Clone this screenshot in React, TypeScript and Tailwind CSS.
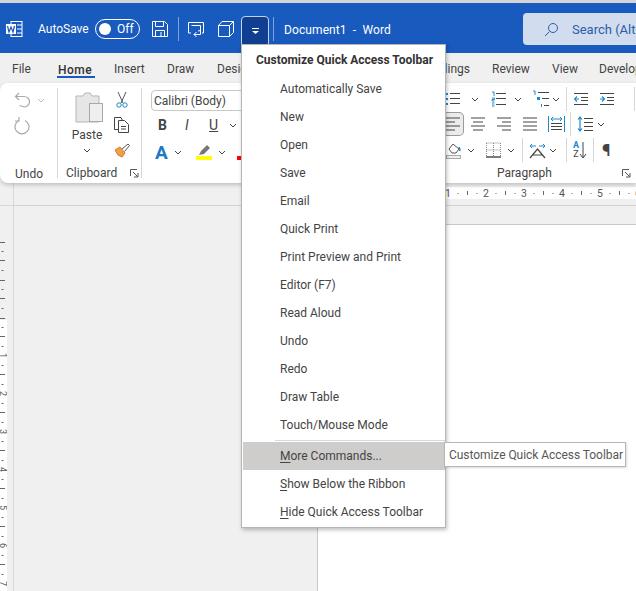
import React from "react";

const Chev = ({ c = "#444", className = "" }: { c?: string; className?: string }) => (
  <svg width="8" height="5" viewBox="0 0 8 5" className={className}>
    <path d="M1 1l3 3 3-3" fill="none" stroke={c} strokeWidth="1" />
  </svg>
);

const Lines = ({ w, xs }: { w: number; xs: [number, number][] }) => (
  <svg width={w} height="14" viewBox={`0 0 ${w} 14`}>
    {xs.map(([a, b], i) => (
      <rect key={i} x={a} y={1 + i * 4 - 0.5} width={b - a} height="1" fill="#444" />
    ))}
  </svg>
);

const BulletList = () => (
  <svg width="18" height="16" viewBox="0 0 18 16">
    <rect x="0" y="2" width="2" height="2" fill="#1e8bcd" /><rect x="0" y="7" width="2" height="2" fill="#1e8bcd" /><rect x="0" y="12" width="2" height="2" fill="#1e8bcd" />
    <path d="M4 2.500h10M4 7.500h10M4 12.500h10" stroke="#444" />
  </svg>
);
const NumberList = () => (
  <svg width="16" height="16" viewBox="0 0 16 16">
    <path d="M1 1h2v4M1 7h2.500v1.500H1V10h2.500M1 12h2.500M1 14h2.500M1 16h2.500" stroke="#1e8bcd" fill="none" />
    <path d="M5 2.500h10M5 7.500h10M5 13.500h10" stroke="#444" />
  </svg>
);
const MultiList = () => (
  <svg width="18" height="18" viewBox="0 0 18 18">
    <path d="M1 1h2v4" stroke="#1e8bcd" fill="none" />
    <rect x="5" y="7" width="3" height="3" fill="#1e8bcd" /><rect x="9" y="14" width="1" height="3" fill="#1e8bcd" />
    <path d="M6 2.500h11M10 8.500h7M12 15.500h5" stroke="#444" />
  </svg>
);
const Indent = ({ out }: { out?: boolean }) => (
  <svg width="15" height="14" viewBox="0 0 15 14">
    <path d="M0 1.500h14M7 5.500h7M7 8.500h7M0 12.500h14" stroke="#444" />
    {out ? <path d="M5 7H.5M3 4.500L.5 7 3 9.500" stroke="#1e8bcd" fill="none" strokeWidth="1.200" /> : <path d="M0 7h4.500M2 4.500L4.500 7 2 9.500" stroke="#1e8bcd" fill="none" strokeWidth="1.200" />}
  </svg>
);

const TitleText = ({ children, className = "" }: { children: React.ReactNode; className?: string }) => (
  <span className={`text-white text-[12px] leading-none ${className}`}>{children}</span>
);

const Tab = ({ label, className = "" }: { label: string; className?: string }) => (
  <span className={`shrink-0 text-[12px] text-[#444] leading-none whitespace-nowrap ${className}`}>{label}</span>
);

const Launcher = () => (
  <svg width="9" height="9" viewBox="0 0 9 9">
    <path d="M.5 7V.5h6.500M3 3l4.500 4.500M4 8h4V4" fill="none" stroke="#555" />
  </svg>
);

const VSep = ({ className = "" }: { className?: string }) => <div className={`w-px shrink-0 bg-[#d6d6d6] ${className}`} />;

const menuItems = ["Automatically Save", "New", "Open", "Save", "Email", "Quick Print", "Print Preview and Print", "Editor (F7)", "Read Aloud", "Undo", "Redo", "Draw Table", "Touch/Mouse Mode"];

const U = ({ children }: { children: React.ReactNode }) => <span className="underline underline-offset-2">{children}</span>;

const HRuler = () => {
  const ticks: React.ReactNode[] = [];
  for (let i = 0; i < 6; i++) {
    const x = 3 + i * 38;
    ticks.push(<text key={"n" + i} x={x - 3} y="10" fontSize="10.500" fill="#555" fontFamily="Roboto">{i + 1}</text>);
    ticks.push(<rect key={"a" + i} x={x + 9.500} y="6" width="1" height="1" fill="#666" />);
    ticks.push(<rect key={"b" + i} x={x + 19} y="4" width="1" height="4" fill="#666" />);
    ticks.push(<rect key={"c" + i} x={x + 28.500} y="6" width="1" height="1" fill="#666" />);
  }
  return (
    <svg width="191" height="12" viewBox="0 0 191 12" className="block">{ticks}</svg>
  );
};

const VRuler = () => {
  const items: React.ReactNode[] = [];
  for (let i = -3; i < 7; i++) {
    const y = 150 + i * 38;
    if (i >= 0) {
      items.push(<text key={"n" + i} x="0" y="0" fontSize="9" fill="#555" fontFamily="Roboto" transform={`translate(0 ${y - 3}) rotate(90)`}>{i + 1}</text>);
    } else {
      items.push(<rect key={"t" + i} x="0" y={y} width="5" height="1" fill="#666" />);
    }
    items.push(<rect key={"a" + i} x="1.500" y={y + 9} width="2" height="1" fill="#666" />);
    items.push(<rect key={"b" + i} x="0" y={y + 18} width="5" height="1" fill="#666" />);
    items.push(<rect key={"c" + i} x="1.500" y={y + 28} width="2" height="1" fill="#666" />);
  }
  return <svg width="7" height="385" viewBox="0 0 7 385" className="block">{items}</svg>;
};

export default function App() {
  return (
    <div className="relative w-[636px] h-[591px] overflow-hidden bg-[#f0f0f0] font-['Roboto',sans-serif] flex flex-col">
      <div className="h-[3px] bg-[#d4d4d4] shrink-0" />
      {/* Title bar */}
      <div className="h-[50px] bg-[#185abd] flex items-center shrink-0">
        <svg width="17" height="16" viewBox="0 0 17 16" className="ml-[6px] mt-[2px] shrink-0">
          <rect x="5" y=".5" width="11" height="15" fill="#185abd" stroke="#fff" />
          <path d="M11 4h5M11 8h5M11 12h5" stroke="#fff" />
          <rect x="0" y="3" width="10" height="10" fill="#fff" />
          <path d="M1.500 5l1.500 6 2-5 2 5 1.500-6" fill="none" stroke="#185abd" strokeWidth="1.200" />
        </svg>
        <TitleText className="ml-[15px] w-[50px] shrink-0 mt-[2px]">AutoSave</TitleText>
        <div className="ml-[7px] w-[45px] h-[20px] mt-[2px] rounded-full border border-white flex items-center shrink-0">
          <div className="ml-[3px] w-[12px] h-[12px] rounded-full bg-white" />
          <span className="ml-[6px] text-[12px] text-white leading-none">Off</span>
        </div>
        <svg width="16" height="16" viewBox="0 0 16 16" className="ml-[12px] mt-[2px] shrink-0">
          <path d="M.5.5h12l3 3v12H.5z" fill="none" stroke="#fff" />
          <path d="M3.500.5v5h8v-5M3.500 15.500v-6h9v6M9 11v4" fill="none" stroke="#fff" />
        </svg>
        <div className="ml-[10px] mt-[2px] w-px h-[24px] bg-[#7ea3dc] shrink-0" />
        <svg width="17" height="16" viewBox="0 0 17 16" className="ml-[9px] mt-[2px] shrink-0">
          <path d="M3 12H.5V1.500h15V12H14" fill="none" stroke="#fff" />
          <path d="M3.500 4.500h9v6" fill="none" stroke="#fff" />
          <path d="M12.500 9v4.500H6M8.500 11L6 13.500 8.500 16M10 10l2.500-.5" fill="none" stroke="#fff" />
        </svg>
        <svg width="16" height="16" viewBox="0 0 16 16" className="ml-[13px] mt-[2px] shrink-0">
          <path d="M.5 4.500h11v11H.5zM.5 4.500L4 .5h11.500v11l-4 4M15.500.5l-4 4" fill="none" stroke="#fff" />
        </svg>
        <div className="ml-[7px] w-[28px] h-[31px] mt-[7px] mb-0 bg-[#103f91] border border-[#c4d3ea] rounded-[4px] flex items-center justify-center shrink-0">
          <svg width="9" height="7" viewBox="0 0 9 7">
            <path d="M1 .5h7" stroke="#fff" />
            <path d="M1 3l3.500 3L8 3z" fill="#fff" />
          </svg>
        </div>
        <div className="ml-[4px] mt-[2px] w-px h-[24px] bg-[#7ea3dc] shrink-0" />
        <TitleText className="ml-[10px] mt-[3px] whitespace-pre tracking-[0.1px]">Document1  -  Word</TitleText>
        <div className="ml-auto mt-[2px] w-[113px] h-[32px] bg-[#d1dcef] rounded-l-[4px] flex items-center overflow-hidden shrink-0">
          <svg width="15" height="15" viewBox="0 0 15 15" className="ml-[21px] shrink-0">
            <circle cx="9" cy="6" r="4.500" fill="none" stroke="#2a5ea8" />
            <path d="M5.500 9.500L1 14" stroke="#2a5ea8" />
          </svg>
          <span className="ml-[13px] text-[13px] text-[#2a5ea8] whitespace-nowrap leading-none">Search (Alt+Q)</span>
        </div>
      </div>
      {/* Tabs */}
      <div className="h-[30px] flex items-center shrink-0 bg-[#f0f0f0] pt-[1px]">
        <Tab label="File" className="ml-[12px] w-[46px]" />
        <div className="relative w-[56px] shrink-0 leading-none">
          <span className="text-[12px] font-medium tracking-[0.5px] text-[#333] leading-none">Home</span>
          <div className="absolute left-[-1px] top-[15px] w-[38px] h-[2px] bg-[#185abd]" />
        </div>
        <Tab label="Insert" className="w-[53px]" />
        <Tab label="Draw" className="w-[50px]" />
        <Tab label="Design" className="w-[60px]" />
        <Tab label="Layout" className="w-[60px]" />
        <Tab label="References" className="w-[84px]" />
        <Tab label="Mailings" className="w-[71px] text-right pr-[22px]" />
        <Tab label="Review" className="w-[60px]" />
        <Tab label="View" className="w-[47px]" />
        <Tab label="Developer" />
      </div>
      {/* Ribbon */}
      <div className="h-[100px] bg-white rounded-l-[8px] shadow-[0_2px_4px_rgba(0,0,0,0.2)] flex shrink-0 relative">
        {/* Undo */}
        <div className="w-[57px] flex flex-col items-start pl-[14px] pt-[8px] shrink-0">
          <div className="flex items-center h-[18px]">
            <svg width="17" height="17" viewBox="0 0 17 17">
              <path d="M5.500 13.500l5 1.500c3 0 5-3 5-5.500s-2.500-5-5.500-5H2M5 1L1.500 4.500 5 8" fill="none" stroke="#aaa" strokeWidth="1.200" />
            </svg>
            <Chev c="#bbb" className="ml-[6px] mt-[1px]" />
          </div>
          <svg width="17" height="18" viewBox="0 0 17 18" className="mt-[8px]">
            <path d="M11 3.500A7 7 0 1 1 5 3.500" fill="none" stroke="#aaa" strokeWidth="1.200" />
            <path d="M5 0v4H1" fill="none" stroke="#aaa" strokeWidth="1.200" />
          </svg>
          <span className="text-[12px] text-[#444] leading-none mt-[33px] ml-[1px]">Undo</span>
        </div>
        <VSep className="my-[5px]" />
        {/* Clipboard */}
        <div className="w-[83px] relative shrink-0 flex flex-col pt-[9px]">
          <div className="flex">
            <div className="w-[58px] flex flex-col items-center">
              <svg width="28" height="31" viewBox="0 0 28 31" className="ml-[4px]">
                <path d="M1 4h7l2-3h5l2 3h7v26H1z" fill="#e6e6e6" stroke="#b5b5b5" />
                <rect x="14.500" y="11.500" width="13" height="18" fill="#efefef" stroke="#a8a8a8" />
              </svg>
              <span className="text-[12px] text-[#444] leading-none mt-[6px]">Paste</span>
              <Chev className="mt-[7px]" />
            </div>
            <div className="flex flex-col items-center w-[16px] ml-[-2px]">
              <svg width="12" height="16" viewBox="0 0 12 16">
                <path d="M2 0l5 11M10 0L5 11" stroke="#555" />
                <circle cx="3" cy="13" r="2.200" fill="none" stroke="#1e8bcd" />
                <circle cx="9" cy="13" r="2.200" fill="none" stroke="#1e8bcd" />
              </svg>
              <svg width="16" height="16" viewBox="0 0 16 16" className="mt-[9px]">
                <path d="M4 12.500H.5V.5H7l1.500 3" fill="none" stroke="#444" />
                <path d="M4.500 3.500h6l4 4v8h-10z" fill="none" stroke="#444" />
                <path d="M7 9.500h5M7 12h5" stroke="#444" />
              </svg>
              <svg width="16" height="15" viewBox="0 0 16 15" className="mt-[10px]">
                <path d="M1 7l5-3 5 6-3 4-4-2z" fill="#f0a04a" stroke="#d67a1c" />
                <path d="M8 6l6-5 1.500 1.500-5 6" fill="none" stroke="#555" />
              </svg>
            </div>
          </div>
          <div className="absolute left-[8px] bottom-[4px] text-[12px] text-[#444] leading-none">Clipboard</div>
          <div className="absolute right-[2px] bottom-[5px] leading-none"><Launcher /></div>
        </div>
        <VSep className="my-[5px]" />
        {/* Font */}
        <div className="w-[140px] pl-[9px] pt-[7px] shrink-0 flex flex-col">
          <div className="w-[130px] h-[21px] border border-[#c8c8c8] rounded-[4px] flex items-center pl-[2px]">
            <span className="text-[12px] text-[#444] leading-none">Calibri (Body)</span>
          </div>
          <div className="flex items-center mt-[6px] h-[16px]">
            <span className="ml-[7px] w-[27px] text-[14px] font-bold text-[#444] leading-none">B</span>
            <span className="w-[24px] text-[14px] italic text-[#444] leading-none">I</span>
            <span className="w-[20px] text-[14px] underline text-[#444] leading-none">U</span>
            <Chev />
          </div>
          <div className="flex items-center mt-[10px] h-[18px]">
            <span className="ml-[4px] w-[19px] text-[19px] font-bold text-[#1e78c8] leading-none">A</span>
            <Chev className="mr-[14px]" />
            <div className="flex flex-col items-center mr-[6px]">
              <svg width="14" height="12" viewBox="0 0 14 12">
                <path d="M2 11l2-4 6-6 3 3-6 6z" fill="#777" />
              </svg>
              <div className="w-[16px] h-[4px] bg-[#ffff00]" />
            </div>
            <Chev className="mr-[11px]" />
            <div className="w-[16px] h-[4px] mt-[12px] bg-[#ff0000]" />
          </div>
        </div>
        {/* Paragraph */}
        <div className="ml-auto w-[192px] relative shrink-0 pl-[2px] pt-[7px] flex flex-col">
          <div className="flex items-center h-[18px]">
            <BulletList />
            <Chev className="ml-[7px]" />
            <span className="ml-[12px]"><NumberList /></span>
            <Chev className="ml-[7px]" />
            <span className="ml-[10px]"><MultiList /></span>
            <Chev className="ml-[2px]" />
            <VSep className="ml-[6px] h-[24px]" />
            <span className="ml-[7px]"><Indent out /></span>
            <span className="ml-[11px]"><Indent /></span>
            <VSep className="ml-[19px] h-[24px]" />
          </div>
          <div className="flex items-center h-[24px] mt-[4px]">
            <div className="w-[19px] h-[24px] ml-[-1px] bg-[#ececec] border border-[#9a9a9a] border-l-0 rounded-r-[5px] flex items-center justify-end pr-[3px]">
              <Lines w={14} xs={[[0, 14], [0, 9], [0, 14], [0, 9]]} />
            </div>
            <span className="ml-[7px]"><Lines w={14} xs={[[0, 14], [2, 12], [0, 14], [2, 12]]} /></span>
            <span className="ml-[12px]"><Lines w={14} xs={[[0, 14], [5, 14], [0, 14], [5, 14]]} /></span>
            <span className="ml-[12px]"><Lines w={14} xs={[[0, 14], [0, 14], [0, 14], [0, 14]]} /></span>
            <svg width="17" height="17" viewBox="0 0 17 17" className="ml-[11px]">
              <path d="M.5 0v16M16.500 0v16" stroke="#1e8bcd" />
              <path d="M3 3h11M5 1L3 3l2 2M12 1l2 2-2 2" stroke="#1e8bcd" fill="none" />
              <path d="M3 7.500h11M3 10.500h11M3 13.500h11" stroke="#444" />
            </svg>
            <VSep className="ml-[5px] h-[24px]" />
            <svg width="16" height="16" viewBox="0 0 16 16" className="ml-[6px]">
              <path d="M3 1v14M1 3.500L3 1l2 2.500M1 12.500L3 15l2-2.500" stroke="#1e8bcd" fill="none" strokeWidth="1.200" />
              <path d="M7 2.500h9M7 6.500h9M7 10.500h9M7 14.500h9" stroke="#444" />
            </svg>
            <Chev className="ml-[4px]" />
          </div>
          <div className="flex items-center h-[22px] mt-[3px]">
            <svg width="16" height="17" viewBox="0 0 16 17">
              <path d="M3 7l4-5 6 5-3 4H6z" fill="#fff" stroke="#555" />
              <path d="M13 5c1 2 1.500 3 .5 4" stroke="#1e8bcd" strokeWidth="1.500" fill="none" />
              <rect x=".5" y="13.500" width="14" height="3" fill="#eee" stroke="#aaa" />
            </svg>
            <Chev className="ml-[5px]" />
            <svg width="15" height="16" viewBox="0 0 15 16" className="ml-[11px]">
              <path d="M.5 1h14M.5 8h14M7.500 1v14M.5 1v14M14.500 1v14" stroke="#888" strokeDasharray="1 1" fill="none" />
              <path d="M0 15h15" stroke="#333" strokeWidth="1.300" />
            </svg>
            <Chev className="ml-[6px]" />
            <VSep className="ml-[7px] h-[24px]" />
            <svg width="17" height="17" viewBox="0 0 17 17" className="ml-[6px]">
              <path d="M1 4h6M3 2L1 4l2 2M10 4h6M14 2l2 2-2 2" stroke="#1e8bcd" fill="none" />
              <path d="M1 16l7.500-9L16 16M4 13h9" stroke="#444" fill="none" strokeWidth="1.200" />
            </svg>
            <Chev className="ml-[3px]" />
            <VSep className="ml-[9px] h-[24px]" />
            <div className="ml-[6px] flex items-center">
              <div className="flex flex-col items-center">
                <span className="text-[9px] leading-[9px] font-bold text-[#1e8bcd]">A</span>
                <span className="text-[9px] leading-[9px] text-[#444]">Z</span>
              </div>
              <svg width="8" height="17" viewBox="0 0 8 17">
                <path d="M4 0v15M1 12l3 4 3-4" stroke="#444" fill="none" />
              </svg>
            </div>
            <VSep className="ml-[6px] h-[24px]" />
            <span className="ml-[8px] text-[17px] font-bold text-[#444] leading-none">¶</span>
          </div>
          <div className="absolute left-[53px] bottom-[4px] text-[12px] text-[#444] leading-none">Paragraph</div>
          <div className="absolute right-[5px] bottom-[5px] leading-none"><Launcher /></div>
        </div>
      </div>
      {/* Work area */}
      <div className="flex flex-1 min-h-0">
        <div className="w-[14px] shrink-0 border-r border-[#d8d8d8] flex flex-col">
          <div className="h-[23px] border-b border-[#d8d8d8] shrink-0" />
          <div className="relative flex-1 overflow-hidden">
            <div className="absolute left-0 top-[114px] w-[7px] bottom-0 bg-white" />
            <div className="absolute left-0 top-0"><VRuler /></div>
          </div>
        </div>
        <div className="flex-1 flex flex-col min-w-0">
          <div className="h-[23px] shrink-0 border-b border-[#d2d2d2] flex items-start">
            <div className="ml-[303px] flex-1 h-[12px] mt-[4px] bg-white flex justify-end">
              <HRuler />
            </div>
          </div>
          <div className="h-[18px] shrink-0" />
          <div className="flex-1 ml-[303px] bg-white border-l border-t border-[#c8c8c8]" />
        </div>
      </div>
      {/* Menu */}
      <div className="absolute left-[241px] top-[44px] w-[205px] h-[484px] bg-white border border-[#b5b5b5] shadow-[1px_2px_4px_rgba(0,0,0,0.25)] text-[12px] text-[#444] flex flex-col">
        <div className="h-[30px] flex items-center pl-[14px] font-bold text-[#333] whitespace-nowrap">Customize Quick Access Toolbar</div>
        {menuItems.map((m) => (
          <div key={m} className="h-[28px] flex items-center pl-[38px] whitespace-nowrap">{m}</div>
        ))}
        <div className="h-px bg-[#d8d8d8] ml-[33px] mt-[1px]" />
        <div className="h-[28px] ml-px mr-0 mt-[1px] bg-[#cfcdcb] flex items-center pl-[37px]"><span><U>M</U>ore Commands...</span></div>
        <div className="h-[28px] flex items-center pl-[38px]"><span><U>S</U>how Below the Ribbon</span></div>
        <div className="h-[28px] flex items-center pl-[38px]"><span><U>H</U>ide Quick Access Toolbar</span></div>
      </div>
      {/* Tooltip */}
      <div className="absolute left-[444px] top-[442px] w-[182px] h-[25px] bg-white border border-[#b5b5b5] shadow-[1px_1px_2px_rgba(0,0,0,0.15)] flex items-center pl-[4px] text-[12px] text-[#575757] tracking-[-0.05px] whitespace-nowrap">Customize Quick Access Toolbar</div>
    </div>
  );
}
